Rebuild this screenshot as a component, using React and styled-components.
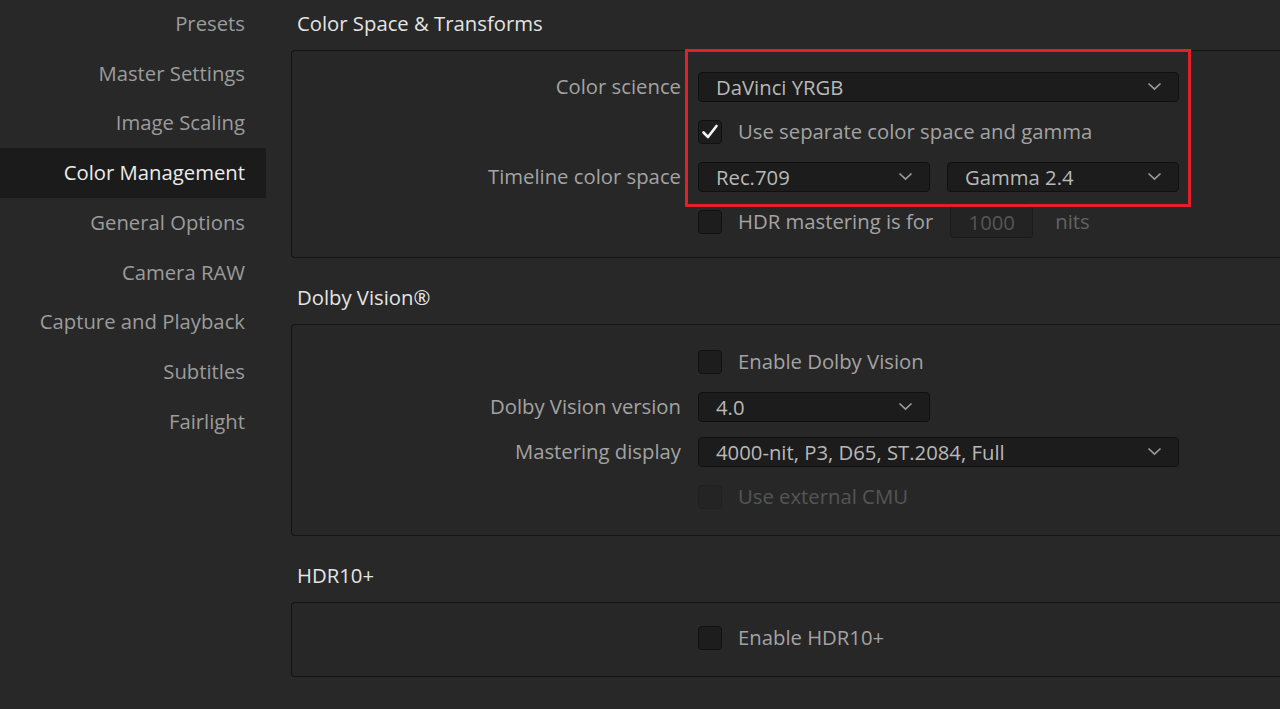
import React from "react";
import styled, { createGlobalStyle } from "styled-components";

const Global = createGlobalStyle`
  html, body { margin: 0; padding: 0; background: #282828; }
  body { font-family: "Open Sans", "Noto Sans", sans-serif; overflow: hidden; }
  * { box-sizing: border-box; }
`;

const FS = "20.3px";

const Page = styled.div`
  display: flex;
  width: 1280px;
  height: 709px;
  background: #282828;
  overflow: hidden;
`;

const Sidebar = styled.nav`
  width: 266px;
  flex: none;
  display: flex;
  flex-direction: column;
  margin-top: -1px;
`;

const NavItem = styled.div`
  height: 49.75px;
  display: flex;
  align-items: center;
  justify-content: flex-end;
  padding: 0 21px 2px 0;
  font-size: ${FS};
  color: ${(p) => (p.$active ? "#ececec" : "#9c9c9c")};
  background: ${(p) => (p.$active ? "#1b1b1b" : "transparent")};
  white-space: nowrap;
`;

const Main = styled.main`
  flex: 1;
  padding-left: 25px;
  display: flex;
  flex-direction: column;
  gap: 16px;
  min-width: 0;
`;

const Section = styled.section`
  display: flex;
  flex-direction: column;
`;

const Heading = styled.h2`
  margin: 0 0 1px 6px;
  height: 49px;
  line-height: 47px;
  font-size: ${FS};
  font-weight: 400;
  color: #e4e4e4;
`;

const Panel = styled.div`
  position: relative;
  border: 1px solid #141414;
  border-right: none;
  border-radius: 4px 0 0 4px;
  background: #272727;
  padding: ${(p) => p.$pad || "21px 0 20px"};
  margin-right: -4px;
`;

const Form = styled.div`
  display: grid;
  grid-template-columns: 389px 1fr;
  column-gap: 17px;
  row-gap: 15px;
`;

const Label = styled.div`
  grid-column: 1;
  height: 30px;
  display: flex;
  align-items: center;
  justify-content: flex-end;
  padding-bottom: 2px;
  font-size: ${FS};
  color: #a3a3a3;
  white-space: nowrap;
`;

const Controls = styled.div`
  grid-column: 2;
  height: 30px;
  display: flex;
  align-items: center;
  gap: 17px;
`;

const SelectBox = styled.div`
  width: ${(p) => p.$w}px;
  height: 30px;
  flex: none;
  display: flex;
  align-items: center;
  justify-content: space-between;
  padding: 0 16px 1px 17px;
  background: #1c1c1c;
  border: 1px solid #101010;
  border-radius: 4px;
  font-size: ${FS};
  color: #b8b8b8;
  white-space: nowrap;
`;

const Box = styled.span`
  width: 24px;
  height: 24px;
  flex: none;
  display: inline-flex;
  align-items: center;
  justify-content: center;
  background: ${(p) => (p.$disabled ? "#242424" : "#1d1d1d")};
  border: 1px solid ${(p) => (p.$disabled ? "#202020" : "#111")};
  border-radius: 4px;
`;

const CheckRow = styled.label`
  display: flex;
  align-items: center;
  gap: 16px;
  font-size: ${FS};
  color: ${(p) => (p.$disabled ? "#555" : "#a3a3a3")};
  white-space: nowrap;
`;

const CheckText = styled.span`
  padding-bottom: 2px;
`;

const NumInput = styled.div`
  width: 83px;
  height: 32px;
  display: flex;
  align-items: center;
  justify-content: center;
  padding-bottom: 1px;
  background: #232323;
  border: 1px solid #1b1b1b;
  border-radius: 3px;
  font-size: ${FS};
  color: #565656;
`;

const Unit = styled.span`
  margin-left: 5px;
  padding-bottom: 2px;
  font-size: ${FS};
  color: #626262;
`;

const Highlight = styled.div`
  position: absolute;
  left: 393px;
  top: -2px;
  width: 506px;
  height: 158px;
  border: 3px solid #e2202a;
  pointer-events: none;
`;

const Chevron = () => (
  <svg width="15" height="9" viewBox="0 0 15 9">
    <polyline points="1.5,1.5 7.5,7.2 13.5,1.5" fill="none" stroke="#9a9a9a" strokeWidth="1.7" />
  </svg>
);

const Check = () => (
  <svg width="18" height="18" viewBox="0 0 18 18">
    <path d="M2.5 9.5 L7 14 L15.5 3" fill="none" stroke="#f4f4f4" strokeWidth="2.6" strokeLinecap="round" strokeLinejoin="round" />
  </svg>
);

const Select = ({ w, children }) => (
  <SelectBox $w={w}>
    <span>{children}</span>
    <Chevron />
  </SelectBox>
);

const Checkbox = ({ checked, disabled, children }) => (
  <CheckRow $disabled={disabled}>
    <Box $disabled={disabled}>{checked && <Check />}</Box>
    <CheckText>{children}</CheckText>
  </CheckRow>
);

const navItems = [
  "Presets",
  "Master Settings",
  "Image Scaling",
  "Color Management",
  "General Options",
  "Camera RAW",
  "Capture and Playback",
  "Subtitles",
  "Fairlight",
];

export default function App() {
  return (
    <>
      <Global />
      <Page>
        <Sidebar>
          {navItems.map((n) => (
            <NavItem key={n} $active={n === "Color Management"}>
              {n}
            </NavItem>
          ))}
        </Sidebar>
        <Main>
          <Section>
            <Heading>Color Space &amp; Transforms</Heading>
            <Panel>
              <Form>
                <Label>Color science</Label>
                <Controls>
                  <Select w={481}>DaVinci YRGB</Select>
                </Controls>
                <Controls>
                  <Checkbox checked>Use separate color space and gamma</Checkbox>
                </Controls>
                <Label>Timeline color space</Label>
                <Controls>
                  <Select w={232}>Rec.709</Select>
                  <Select w={232}>Gamma 2.4</Select>
                </Controls>
                <Controls>
                  <Checkbox>HDR mastering is for</Checkbox>
                  <NumInput>1000</NumInput>
                  <Unit>nits</Unit>
                </Controls>
              </Form>
              <Highlight />
            </Panel>
          </Section>
          <Section>
            <Heading>Dolby Vision®</Heading>
            <Panel $pad="22px 0 23px">
              <Form>
                <Controls>
                  <Checkbox>Enable Dolby Vision</Checkbox>
                </Controls>
                <Label>Dolby Vision version</Label>
                <Controls>
                  <Select w={232}>4.0</Select>
                </Controls>
                <Label>Mastering display</Label>
                <Controls>
                  <Select w={481}>4000-nit, P3, D65, ST.2084, Full</Select>
                </Controls>
                <Controls>
                  <Checkbox disabled>Use external CMU</Checkbox>
                </Controls>
              </Form>
            </Panel>
          </Section>
          <Section>
            <Heading>HDR10+</Heading>
            <Panel $pad="20px 0 23px">
              <Form>
                <Controls>
                  <Checkbox>Enable HDR10+</Checkbox>
                </Controls>
              </Form>
            </Panel>
          </Section>
        </Main>
      </Page>
    </>
  );
}
